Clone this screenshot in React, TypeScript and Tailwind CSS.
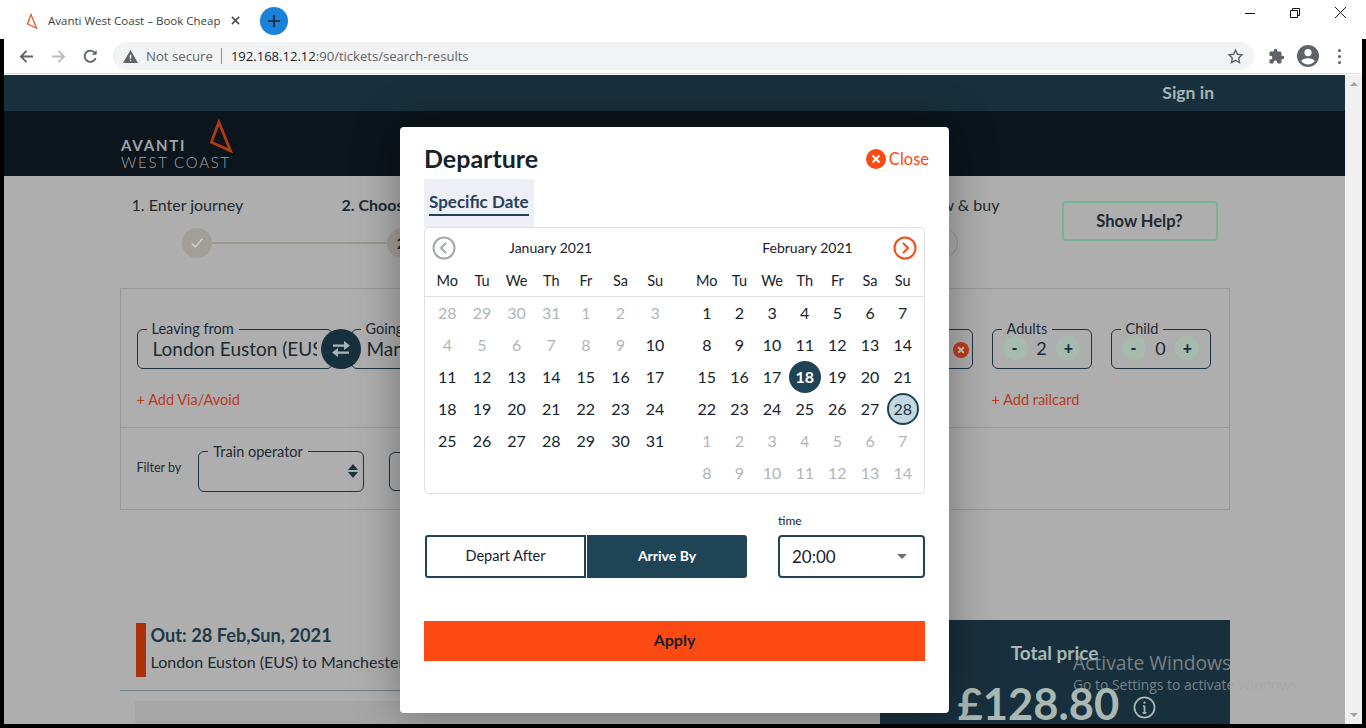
import React from "react";

const font = { fontFamily: "Lato, 'Liberation Sans', sans-serif" };

const jan = [
  [["28", 0], ["29", 0], ["30", 0], ["31", 0], ["1", 0], ["2", 0], ["3", 0]],
  [["4", 0], ["5", 0], ["6", 0], ["7", 0], ["8", 0], ["9", 0], ["10", 1]],
  [["11", 1], ["12", 1], ["13", 1], ["14", 1], ["15", 1], ["16", 1], ["17", 1]],
  [["18", 1], ["19", 1], ["20", 1], ["21", 1], ["22", 1], ["23", 1], ["24", 1]],
  [["25", 1], ["26", 1], ["27", 1], ["28", 1], ["29", 1], ["30", 1], ["31", 1]],
] as [string, number][][];

const feb = [
  [["1", 1], ["2", 1], ["3", 1], ["4", 1], ["5", 1], ["6", 1], ["7", 1]],
  [["8", 1], ["9", 1], ["10", 1], ["11", 1], ["12", 1], ["13", 1], ["14", 1]],
  [["15", 1], ["16", 1], ["17", 1], ["18", 2], ["19", 1], ["20", 1], ["21", 1]],
  [["22", 1], ["23", 1], ["24", 1], ["25", 1], ["26", 1], ["27", 1], ["28", 3]],
  [["1", 0], ["2", 0], ["3", 0], ["4", 0], ["5", 0], ["6", 0], ["7", 0]],
  [["8", 0], ["9", 0], ["10", 0], ["11", 0], ["12", 0], ["13", 0], ["14", 0]],
] as [string, number][][];

const days = ["Mo", "Tu", "We", "Th", "Fr", "Sa", "Su"];

function Cell({ d, s }: { d: string; s: number }) {
  if (s === 2)
    return (
      <div className="flex h-8 items-center justify-center">
        <span className="flex h-8 w-8 items-center justify-center rounded-full bg-[#1f4456] font-bold text-white">{d}</span>
      </div>
    );
  if (s === 3)
    return (
      <div className="flex h-8 items-center justify-center">
        <span className="flex h-8 w-8 items-center justify-center rounded-full border-2 border-[#1f4456] bg-[#c3d7e5] text-[#1f2d3a]">{d}</span>
      </div>
    );
  return <div className={`flex h-8 items-center justify-center ${s === 0 ? "text-[#b1b5b8]" : "text-[#16222e]"}`}>{d}</div>;
}

function Month({ rows, width }: { rows: [string, number][][]; width: string }) {
  return (
    <div className={`grid grid-cols-7 ${width}`}>
      {rows.flat().map(([d, s], i) => (
        <Cell key={i} d={d} s={s} />
      ))}
    </div>
  );
}

function Legend({ label, className, children }: { label: string; className: string; children?: React.ReactNode }) {
  return (
    <fieldset className={`rounded-[6px] border border-[#1d3340] ${className}`}>
      {label ? <legend className="ml-[9px] px-[5px] text-[14.5px] leading-[12px] text-[#1d2a33]">{label}</legend> : null}
      {children}
    </fieldset>
  );
}

function Round({ c }: { c: string }) {
  return <span className="flex h-6 w-6 items-center justify-center rounded-full bg-[#a6bbae] text-[16px] font-black text-[#17303e]">{c}</span>;
}

function Stepper({ label, value }: { label: string; value: string }) {
  return (
    <Legend label={label} className="h-[46px] w-[100px]">
      <div className="flex items-center justify-between px-[10px] pt-[1px]">
        <Round c="-" />
        <span className="text-[18px] leading-[24px] text-[#1d2a33]">{value}</span>
        <Round c="+" />
      </div>
    </Legend>
  );
}

function Logo({ className }: { className: string }) {
  return (
    <svg viewBox="0 0 22 32" className={className} fill="none">
      <path d="M9 3 L2 22 L20 30 Z" stroke="currentColor" strokeWidth="2.6" strokeLinejoin="miter" />
    </svg>
  );
}

function Browser() {
  return (
    <div className="relative h-[75px] shrink-0 bg-white">
      <div className="flex h-[39px] items-start">
        <div className="ml-[26px] mt-[12px] flex w-[220px] items-center text-[11.5px] text-[#3b3f44]" style={{ fontFamily: "'Open Sans', sans-serif" }}>
          <Logo className="h-[16px] w-[12px] text-[#f0532c]" />
          <span className="ml-[10px] w-[172px] overflow-hidden whitespace-nowrap">Avanti West Coast – Book Cheap</span>
          <svg viewBox="0 0 10 10" className="ml-[11px] h-[9px] w-[9px] shrink-0" stroke="#4a4d52" strokeWidth="1.7"><path d="M1 1l8 8M9 1l-8 8" /></svg>
        </div>
        <div className="ml-[14px] mt-[7px] flex h-[28px] w-[28px] items-center justify-center rounded-full bg-[#1a82d8]">
          <svg viewBox="0 0 12 12" className="h-[12px] w-[12px]" stroke="#17222c" strokeWidth="1.6"><path d="M6 0v12M0 6h12" /></svg>
        </div>
        <div className="ml-auto mt-[7px] mr-[20px] flex items-center gap-[35px]">
          <svg viewBox="0 0 10 10" className="h-[10px] w-[10px]" stroke="#111" strokeWidth="1"><path d="M0 5.5h10" /></svg>
          <svg viewBox="0 0 10 10" className="h-[10px] w-[10px]" stroke="#111" strokeWidth="1" fill="none"><path d="M0.5 2.5h7v7h-7zM2.5 2.5v-2h7v7h-2" /></svg>
          <svg viewBox="0 0 10 10" className="h-[11px] w-[11px]" stroke="#111" strokeWidth="0.9"><path d="M0 0l10 10M10 0l-10 10" /></svg>
        </div>
      </div>
      <div className="flex h-[35px] items-center border-b border-[#dddfe2] pl-[4px] pr-[4px]">
        <svg viewBox="0 0 16 16" className="ml-[15px] h-[15px] w-[15px]" fill="none" stroke="#5f6368" strokeWidth="1.9"><path d="M15 8H2M8 2L2 8l6 6" /></svg>
        <svg viewBox="0 0 16 16" className="ml-[17px] h-[15px] w-[15px]" fill="none" stroke="#b9bbbe" strokeWidth="1.9"><path d="M1 8h13M8 2l6 6-6 6" /></svg>
        <svg viewBox="0 0 16 16" className="ml-[17px] h-[15px] w-[15px]" fill="none" stroke="#5f6368" strokeWidth="1.9"><path d="M13.5 9.5A6 6 0 1 1 12.5 4" /><path d="M14.5 1v5h-5z" fill="#5f6368" stroke="none" /></svg>
        <div className="ml-[15px] flex h-[28px] w-[1141px] items-center rounded-full bg-[#f1f3f4] pl-[10px] text-[14px]" style={{ fontFamily: "'Open Sans', sans-serif" }}>
          <svg viewBox="0 0 16 14" className="h-[13px] w-[15px]"><path d="M8 0l8 14H0z" fill="#5f6368" /><path d="M7.2 5h1.6v4.5H7.2zM7.2 10.5h1.6v1.6H7.2z" fill="#f1f3f4" /></svg>
          <span className="ml-[8px] pt-[1px] text-[13.2px] text-[#5f6368]">Not secure</span>
          <span className="ml-[8px] h-[16px] w-px bg-[#8b8e92]" />
          <span className="ml-[9px] pt-[1px] text-[13.05px] text-[#5f6368]"><span className="text-[#202124]">192.168.12.12</span>:90/tickets/search-results</span>
          <svg viewBox="0 0 24 24" className="ml-auto mr-[10px] h-[17px] w-[17px]" fill="none" stroke="#5f6368" strokeWidth="2"><path d="M12 3l2.8 5.9 6.4.8-4.7 4.4 1.2 6.4L12 17.3l-5.7 3.2 1.2-6.4-4.7-4.4 6.4-.8z" /></svg>
        </div>
        <svg viewBox="0 0 24 24" className="ml-[14px] h-[17px] w-[17px]" fill="#5f6368"><path d="M20.5 11H19V7a2 2 0 0 0-2-2h-4V3.5a2.5 2.5 0 0 0-5 0V5H4a2 2 0 0 0-2 2v3.8h1.5a2.7 2.7 0 0 1 0 5.4H2V20a2 2 0 0 0 2 2h3.8v-1.5a2.7 2.7 0 0 1 5.4 0V22H17a2 2 0 0 0 2-2v-4h1.5a2.5 2.5 0 0 0 0-5z" /></svg>
        <svg viewBox="0 0 24 24" className="ml-[11px] h-[24px] w-[24px]" fill="#5f6368"><path d="M12 1a11 11 0 1 0 0 22 11 11 0 0 0 0-22zm0 4a3.6 3.6 0 1 1 0 7.2A3.6 3.6 0 0 1 12 5zm0 15.5a8.5 8.5 0 0 1-6.8-3.5c1.2-1.8 4-2.8 6.8-2.8s5.6 1 6.8 2.8a8.5 8.5 0 0 1-6.8 3.5z" /></svg>
        <div className="ml-[18px] flex flex-col gap-[3px]">
          <span className="h-[3px] w-[3px] rounded-full bg-[#5f6368]" />
          <span className="h-[3px] w-[3px] rounded-full bg-[#5f6368]" />
          <span className="h-[3px] w-[3px] rounded-full bg-[#5f6368]" />
        </div>
      </div>
    </div>
  );
}

function Page() {
  return (
    <div className="h-[649px] overflow-hidden bg-[#aeaeae] text-[#1d2a33]" style={font}>
      <div className="flex h-[36px] items-center justify-end bg-[#18303d] pr-[131px] text-[17.5px] font-bold text-[#a9b3b3]">Sign in</div>
      <div className="flex h-[65px] items-center bg-[#0c151c] pl-[117px]">
        <div className="relative h-[50px] w-[112px] text-[#a0a5a7]">
          <div className="absolute left-0 top-[17px] text-[15px] font-bold leading-[18px] tracking-[1.8px]">AVANTI</div>
          <div className="absolute left-0 top-[34px] whitespace-nowrap text-[15px] font-light leading-[18px] tracking-[1.75px]">WEST COAST</div>
          <Logo className="absolute left-[88px] top-[0px] h-[34px] w-[24px] text-[#b13a16]" />
        </div>
      </div>

      <div className="mx-auto flex h-[112px] w-[1110px] items-start justify-between pt-[19px] text-[16px] leading-[20px]">
        <div className="flex w-[880px] items-start">
          <div className="w-[222px] pl-[12px]">1. Enter journey
            <div className="relative z-10 ml-[50px] mt-[13px] flex h-[30px] w-[30px] items-center justify-center rounded-full bg-[#a29f98]">
              <svg viewBox="0 0 16 16" className="h-[14px] w-[14px]" fill="none" stroke="#d4d2cd" strokeWidth="1.7"><path d="M2 8.5l4 4 8-9" /></svg>
            </div>
          </div>
          <div className="relative flex-1">
            <span className="font-bold">2. Choose tickets</span>
            <div className="absolute left-[-160px] top-[47px] h-[2px] w-[206px] bg-[#9a978f]" />
            <div className="absolute left-[45px] top-[33px] flex h-[30px] w-[30px] items-center justify-center rounded-full bg-[#a29f98] font-bold">2</div>
          </div>
          <div className="text-right">Review & buy
            <div className="ml-auto mr-[42px] mt-[13px] h-[30px] w-[30px] rounded-full border border-[#959595]" />
          </div>
        </div>
        <button className="mr-[12px] mt-[6px] h-[40px] w-[156px] rounded-[4px] border-2 border-[#76b396] text-[16.5px] font-bold">Show Help?</button>
      </div>

      <div className="mx-auto w-[1110px] border border-[#999999]">
        <div className="h-[139px] border-b border-[#999999] pl-[16px] pt-[34px]">
          <div className="flex">
            <div className="relative flex">
              <Legend label="Leaving from" className="h-[46px] w-[196px] overflow-hidden">
                <div className="ml-[15px] w-[164px] overflow-hidden whitespace-nowrap pt-[1px] text-[19px] leading-[26px]">London Euston (EUS)</div>
              </Legend>
              <Legend label="Going to" className="relative ml-[18px] h-[46px] w-[622px]">
                <div className="overflow-hidden whitespace-nowrap pl-[15px] pt-[1px] text-[19px] leading-[26px]">Manchester</div>
                <svg viewBox="0 0 20 20" className="absolute right-[3px] top-[7px] h-[16px] w-[16px]"><circle cx="10" cy="10" r="10" fill="#bd3e1b" /><path d="M6.5 6.5l7 7M13.5 6.5l-7 7" stroke="#c9c4c0" strokeWidth="2.4" /></svg>
              </Legend>
              <div className="absolute left-[184px] top-[6px] flex h-[40px] w-[40px] items-center justify-center rounded-full bg-[#17303e]">
                <svg viewBox="0 0 20 16" className="h-[16px] w-[20px]" fill="#a9b6b8">
                  <path d="M2 4h11V0.5l6 4.5-6 4.5V6.2H2z" transform="translate(0 -0.5)" />
                  <path d="M18 10H7V6.5L1 11l6 4.5v-3.3h11z" transform="translate(0 0.5)" />
                </svg>
              </div>
            </div>
            <div className="ml-[19px] flex gap-[19px]">
              <Stepper label="Adults" value="2" />
              <Stepper label="Child" value="0" />
            </div>
          </div>
          <div className="mt-[20px] flex text-[14.5px] leading-[22px] text-[#b93a1f]">
            <span className="w-[855px]">+ Add Via/Avoid</span>
            <span>+ Add railcard</span>
          </div>
        </div>
        <div className="flex h-[81px] items-center pl-[16px]">
          <span className="text-[12.5px]">Filter by</span>
          <Legend label="Train operator" className="relative ml-[17px] h-[46px] w-[166px] flex-none">
            <svg viewBox="0 0 10 14" className="absolute right-[5px] top-[6px] h-[14px] w-[10px]" fill="#1d3340"><path d="M5 0l5 6H0zM0 8h10l-5 6z" /></svg>
          </Legend>
          <Legend label="" className="ml-[25px] mt-[6px] h-[39px] w-[166px] flex-none" />
        </div>
      </div>

      <div className="mx-auto mt-[110px] flex h-[110px] w-[1110px]">
        <div className="flex-1 pt-[3px]">
          <div className="flex h-[54px]">
            <div className="ml-[16px] w-[10px] shrink-0 bg-[#ab310a]" />
            <div className="ml-[5px]">
              <div className="text-[18.2px] font-bold leading-[25px] text-[#1f3a4a]">Out: 28 Feb,Sun, 2021</div>
              <div className="mt-[2px] text-[16px] leading-[24px]">London Euston (EUS) to Manchester</div>
            </div>
          </div>
          <div className="mt-[13px] h-px bg-[#6d7f8b]" />
          <div className="ml-[15px] mt-[10px] h-[30px] bg-[#a6a6a6]" />
        </div>
        <div className="relative w-[350px] shrink-0 bg-[#18303d] pt-[20px] text-center text-[#a9b8b3]">
          <div className="text-[19px] font-bold leading-[26px]">Total price</div>
          <div className="mt-[10px] flex items-end pl-[78px]">
            <span className="whitespace-nowrap text-[43.5px] font-bold leading-[54px]">£128.80</span>
            <svg viewBox="0 0 24 24" className="mb-[11px] ml-[14px] h-[23px] w-[23px]" fill="none" stroke="#a9b8b3" strokeWidth="1.8"><circle cx="12" cy="12" r="10.5" /><path d="M12 10.5v7M10 17.5h4M10.5 10.5H12" /><circle cx="12" cy="7" r="1.2" fill="#a9b8b3" stroke="none" /></svg>
          </div>
        </div>
      </div>
    </div>
  );
}

function Modal() {
  return (
    <div className="absolute left-[400px] top-[127px] h-[586px] w-[549px] rounded-[4px] bg-white px-[24px] pt-[14px] text-[#16222e] shadow-[0_0_45px_rgba(0,0,0,0.35)]" style={font}>
      <div className="mb-[2px] flex h-[36px] items-center justify-between">
        <h2 className="pb-[2px] text-[25px] font-bold leading-[34px] text-[#15222e]">Departure</h2>
        <div className="mr-[-4px] flex items-center gap-[3px] text-[16.5px] text-[#fd4a13]">
          <svg viewBox="0 0 20 20" className="h-[20px] w-[20px]"><circle cx="10" cy="10" r="10" fill="#fd4a13" /><path d="M6.5 6.5l7 7M13.5 6.5l-7 7" stroke="#fff" strokeWidth="2" /></svg>
          Close
        </div>
      </div>
      <div className="h-[48px] w-[110px] bg-[#eeeef7] px-[5px] pt-[13px] text-[17px] font-bold leading-[20px] text-[#2a4156]">
        <span className="inline-block whitespace-nowrap border-b-2 border-[#1f4456] pb-[2px]">Specific Date</span>
      </div>
      <div className="h-[267px] w-[501px] rounded-[4px] border border-[#dddfe1] text-[16px]">
        <div className="h-[69px] border-b border-[#dddfe1]">
          <div className="flex h-[40px] items-center px-[7px] text-[14px]">
            <svg viewBox="0 0 24 24" className="h-[24px] w-[24px]" fill="none" stroke="#a4a8ab" strokeWidth="2"><circle cx="12" cy="12" r="10.5" /><path d="M14 7l-5 5 5 5" /></svg>
            <span className="mb-[2px] ml-[53px]">January 2021</span>
            <span className="mb-[2px] ml-[170px]">February 2021</span>
            <svg viewBox="0 0 24 24" className="ml-auto h-[24px] w-[24px]" fill="none" stroke="#fd4a13" strokeWidth="2"><circle cx="12" cy="12" r="10.5" /><path d="M10 7l5 5-5 5" /></svg>
          </div>
          <div className="flex px-[5px] pt-[2px] text-[14.5px]">
            <div className="grid w-[244px] grid-cols-7 text-center">{days.map((d) => <span key={d}>{d}</span>)}</div>
            <div className="ml-[18px] grid w-[230px] grid-cols-7 text-center">{days.map((d) => <span key={d}>{d}</span>)}</div>
          </div>
        </div>
        <div className="flex px-[5px] text-[16px]">
          <Month rows={jan} width="w-[244px] self-start" />
          <Month rows={feb} width="ml-[18px] w-[230px] self-start" />
        </div>
      </div>
      <div className="mt-[20px] flex items-end">
        <div className="flex h-[43px] w-[323px] gap-px pl-px text-[14.5px]">
          <div className="flex w-[161px] shrink-0 items-center justify-center rounded-l-[3px] border-2 border-[#1f4456] pb-[1px]">Depart After</div>
          <div className="flex flex-1 items-center justify-center rounded-r-[3px] bg-[#1f4456] pb-[3px] text-[14px] font-bold text-white">Arrive By</div>
        </div>
        <div className="ml-[31px] w-[147px]">
          <div className="mb-[7px] text-[12px] leading-[14px]">time</div>
          <div className="flex h-[43px] items-center justify-between rounded-[4px] border-2 border-[#1f4456] pl-[12px] pr-[16px] text-[17px]">
            20:00
            <span className="h-0 w-0 border-x-[5px] border-t-[5px] border-x-transparent border-t-[#6f6f6f]" />
          </div>
        </div>
      </div>
      <button className="mt-[43px] h-[40px] w-[501px] bg-[#fd4a13] pb-[2px] text-[16px] font-bold text-[#15222e]">Apply</button>
    </div>
  );
}

export default function App() {
  return (
    <div className="relative h-[728px] w-[1366px] overflow-hidden bg-black">
      <Browser />
      <div className="absolute bottom-[4px] left-[4px] right-[4px] top-[75px] flex">
        <div className="w-[1341px] shrink-0"><Page /></div>
        <div className="relative flex-1 bg-[#f0f0f0]">
          <span className="absolute left-[5px] top-[7px] h-0 w-0 border-x-[4px] border-b-[4px] border-x-transparent border-b-[#a3a3a3]" />
          <span className="absolute bottom-[7px] left-[5px] h-0 w-0 border-x-[4px] border-t-[4px] border-x-transparent border-t-[#a3a3a3]" />
        </div>
      </div>
      <div className="absolute left-0 top-[39px] h-[689px] w-[4px] bg-black" />
      <div className="absolute right-0 top-[39px] h-[689px] w-[4px] bg-black" />
      <Modal />
      <div className="absolute left-[1073px] top-[651px] text-[19.3px] leading-[24px] text-[#a6a6a6]/70" style={{ fontFamily: "'Open Sans', sans-serif" }}>Activate Windows</div>
      <div className="absolute left-[1073px] top-[676px] text-[13.9px] leading-[18px] text-[#a6a6a6]/70" style={{ fontFamily: "'Open Sans', sans-serif" }}>Go to Settings to activate Windows.</div>
    </div>
  );
}
